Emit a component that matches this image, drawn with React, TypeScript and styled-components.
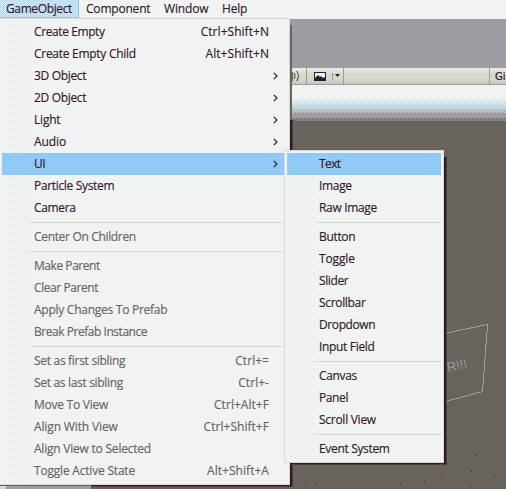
import React from "react";
import styled, { createGlobalStyle, css } from "styled-components";

const paper = "#f1f3f2";
const line = "#d6d9cb";
const sky = "#91c9f7";
const ink = "#32182b";
const stone = "#68635c";
const haze = "#9e9ba1";

const Global = createGlobalStyle`
  html, body { margin: 0; padding: 0; overflow: hidden; }
  body { background: ${stone}; font-family: "Open Sans", "Noto Sans", sans-serif; font-size: 12px; color: ${ink}; }
`;

const Window = styled.div`
  position: relative;
  width: 506px;
  height: 489px;
  overflow: hidden;
  display: flex;
  flex-direction: column;
`;

const MenuBar = styled.nav`
  flex: none;
  display: flex;
  height: 19px;
  background: ${paper};
`;

const BarItem = styled.span<{ $width: number; $active?: boolean; $spacing?: number }>`
  box-sizing: border-box;
  width: ${(p) => p.$width}px;
  height: 18px;
  padding-left: ${(p) => (p.$active ? 6 : 7)}px;
  line-height: 17px;
  white-space: nowrap;
  letter-spacing: ${(p) => p.$spacing ?? 0}px;
  -webkit-text-stroke: 0.15px currentColor;
  ${(p) =>
    p.$active &&
    css`
      border-right: 1px solid ${sky};
      border-bottom: 1px solid ${sky};
      background: repeating-conic-gradient(#a9d5f9 0 25%, #dcebf5 0 50%) 0 0 / 2px 2px;
    `}
`;

const Backdrop = styled.div`
  flex: none;
  height: 49px;
  background: ${haze};
`;

const SceneTools = styled.div`
  flex: none;
  display: flex;
  box-sizing: border-box;
  height: 17px;
  padding-left: 290px;
  border-bottom: 1px solid ${haze};
  background: linear-gradient(#eceee6 0, ${line} 6px, ${line} 11px, #c5c6bd 16px);
`;

const ToolCell = styled.div<{ $width: number }>`
  box-sizing: border-box;
  flex: none;
  display: flex;
  width: ${(p) => p.$width}px;
  height: 16px;
  border-right: 1px solid ${haze};
`;

const GizmoLabel = styled.span`
  padding-left: 5px;
  font: 10px/17px "DejaVu Sans", sans-serif;
  -webkit-text-stroke: 0.2px currentColor;
`;

const Horizon = styled.div`
  flex: none;
  height: 36px;
  background:
    repeating-conic-gradient(#91c9f755 0 25%, transparent 0 50%) 0 14px / 4px 4px repeat-x,
    repeating-conic-gradient(#91c9f766 0 25%, transparent 0 50%) 0 18px / 2px 2px repeat-x,
    repeating-conic-gradient(#91c9f799 0 25%, transparent 0 50%) 0 20px / 4px 2px repeat-x,
    repeating-conic-gradient(#91c9f799 0 25%, transparent 0 50%) 0 23px / 2px 2px repeat-x,
    repeating-conic-gradient(#d6d9cb88 0 25%, transparent 0 50%) 0 26px / 4px 2px repeat-x,
    repeating-conic-gradient(${haze} 0 25%, transparent 0 50%) 0 34px / 2px 2px repeat-x,
    linear-gradient(${paper} 0, ${paper} 14px, #dfe8e9 19px, #d0d8d5 23px, #b5bac0 26px, ${haze} 28px, ${haze} 33px, ${stone} 34px);
`;

const Scene = styled.div`
  flex: 1;
  background: ${stone};
`;

const WirePanel = styled.svg`
  position: absolute;
  left: 444px;
  top: 320px;
`;

const Specks = styled.svg`
  position: absolute;
  left: 290px;
  top: 450px;
`;

const BottomEdge = styled.div`
  position: absolute;
  left: 0;
  top: 485px;
  width: 91px;
  height: 4px;
  background: linear-gradient(90deg, ${line} 0 6px, ${haze} 6px);
  border-top: 1px solid ${stone};
`;

const MenuPanel = styled.div<{ $left: number; $top: number; $width: number; $height: number; $sub?: boolean }>`
  position: absolute;
  left: ${(p) => p.$left}px;
  top: ${(p) => p.$top}px;
  box-sizing: border-box;
  width: ${(p) => p.$width}px;
  height: ${(p) => p.$height}px;
  padding: 2px 2px 0;
  border: 1px solid ${line};
  border-left-width: ${(p) => (p.$sub ? 1 : 0)}px;
  background-color: ${paper};
`;

const Shade = styled.div<{ $left: number; $top: number; $width: number; $height: number; $tone?: string }>`
  position: absolute;
  left: ${(p) => p.$left}px;
  top: ${(p) => p.$top}px;
  width: ${(p) => p.$width}px;
  height: ${(p) => p.$height}px;
  background: repeating-conic-gradient(${(p) => p.$tone ?? ink} 0 25%, ${stone} 0 50%) 0 0 / 2px 2px;
  &::after {
    content: "";
    position: absolute;
    inset: 0 1px 1px 0;
    background: ${(p) => p.$tone ?? ink};
  }
`;

const List = styled.div`
  position: relative;
  display: flex;
  flex-direction: column;
  &::before {
    content: "";
    position: absolute;
    left: 1px;
    top: 2px;
    bottom: 0;
    width: 26px;
    background-image:
      radial-gradient(circle at 1.5px 1.5px, ${line} 0.7px, transparent 0.8px),
      radial-gradient(circle at 5.5px 2.5px, ${line} 0.7px, transparent 0.8px),
      radial-gradient(circle at 3.5px 5.5px, ${line} 0.7px, transparent 0.8px),
      radial-gradient(circle at 7.5px 6.5px, ${line} 0.7px, transparent 0.8px);
    background-size: 9px 8px;
  }
`;

const Row = styled.div<{ $active?: boolean; $disabled?: boolean }>`
  position: relative;
  flex: none;
  display: flex;
  align-items: flex-start;
  box-sizing: border-box;
  height: 22px;
  padding-left: 32px;
  line-height: 21px;
  white-space: nowrap;
  color: ${(p) => (p.$disabled ? "#68635f" : ink)};
  background: ${(p) => (p.$active ? sky : "transparent")};
  -webkit-text-stroke: 0.15px currentColor;
`;

const Label = styled.span<{ $spacing: number }>`
  flex: 1;
  letter-spacing: ${(p) => p.$spacing}px;
`;

const Shortcut = styled.span`
  padding-right: 18px;
  letter-spacing: 0.04px;
`;

const Arrow = styled.svg`
  flex: none;
  align-self: center;
  margin-right: 9px;
`;

const Rule = styled.div`
  flex: none;
  height: 1px;
  margin: 3px 0 3px 28px;
  background: ${line};
`;

type Entry = { label: string; keys?: string; arrow?: boolean; active?: boolean; disabled?: boolean; spacing?: number } | null;

const mainMenu: Entry[] = [
  { label: "Create Empty", keys: "Ctrl+Shift+N", spacing: -0.4 },
  { label: "Create Empty Child", keys: "Alt+Shift+N", spacing: -0.28 },
  { label: "3D Object", arrow: true },
  { label: "2D Object", arrow: true },
  { label: "Light", arrow: true, spacing: -0.2 },
  { label: "Audio", arrow: true, spacing: -0.1 },
  { label: "UI", arrow: true, active: true, spacing: -0.5 },
  { label: "Particle System" },
  { label: "Camera" },
  null,
  { label: "Center On Children", disabled: true },
  null,
  { label: "Make Parent", disabled: true, spacing: -0.45 },
  { label: "Clear Parent", disabled: true, spacing: -0.42 },
  { label: "Apply Changes To Prefab", disabled: true, spacing: -0.26 },
  { label: "Break Prefab Instance", disabled: true, spacing: -0.46 },
  null,
  { label: "Set as first sibling", keys: "Ctrl+=", disabled: true, spacing: -0.3 },
  { label: "Set as last sibling", keys: "Ctrl+-", disabled: true, spacing: -0.32 },
  { label: "Move To View", keys: "Ctrl+Alt+F", disabled: true, spacing: -0.25 },
  { label: "Align With View", keys: "Ctrl+Shift+F", disabled: true, spacing: -0.13 },
  { label: "Align View to Selected", disabled: true, spacing: -0.22 },
  { label: "Toggle Active State", keys: "Alt+Shift+A", disabled: true, spacing: -0.2 },
];

const uiMenu: Entry[] = [
  { label: "Text", active: true, spacing: -0.6 },
  { label: "Image" },
  { label: "Raw Image" },
  null,
  { label: "Button" },
  { label: "Toggle", spacing: -0.15 },
  { label: "Slider", spacing: -0.4 },
  { label: "Scrollbar" },
  { label: "Dropdown", spacing: -0.4 },
  { label: "Input Field" },
  null,
  { label: "Canvas" },
  { label: "Panel", spacing: -0.4 },
  { label: "Scroll View", spacing: -0.27 },
  null,
  { label: "Event System" },
];

function Entries({ items }: { items: Entry[] }) {
  return (
    <List>
      {items.map((it, i) =>
        it === null ? (
          <Rule key={i} />
        ) : (
          <Row key={i} $active={it.active} $disabled={it.disabled}>
            <Label $spacing={it.spacing ?? -0.33}>{it.label}</Label>
            {it.keys && <Shortcut>{it.keys}</Shortcut>}
            {it.arrow && (
              <Arrow width="5" height="8" viewBox="0 0 5 8">
                <path d="M.8.8 4 4 .8 7.2" fill="none" stroke={ink} strokeWidth="1.2" />
              </Arrow>
            )}
          </Row>
        )
      )}
    </List>
  );
}

export default function App() {
  return (
    <Window>
      <Global />
      <MenuBar>
        <BarItem $width={79} $active $spacing={-0.38}>GameObject</BarItem>
        <BarItem $width={78} $spacing={-0.2}>Component</BarItem>
        <BarItem $width={58} $spacing={-0.15}>Window</BarItem>
        <BarItem $width={50} $spacing={-0.2}>Help</BarItem>
      </MenuBar>
      <Backdrop />
      <SceneTools>
        <ToolCell $width={17}>
          <svg width="16" height="16" viewBox="0 0 16 16" fill="none" stroke={stone} strokeWidth="1.2">
            <path d="M0 7 2 5v7L0 10" fill={ink} stroke={ink} />
            <path d="M4 5q2 3 0 6M6.500 3q4 5 0 10" />
          </svg>
        </ToolCell>
        <ToolCell $width={37}>
          <svg width="36" height="16" viewBox="0 0 36 16">
            <path d="M7 4h12v9H7z" fill={ink} />
            <path d="M8 5h10v4l-2 1-2-2-1 1-2-2-3 3z" fill={paper} />
            <path d="M25.500 5v8" stroke={haze} />
            <path d="M28 6h5l-2.500 3z" fill={ink} />
          </svg>
        </ToolCell>
        <ToolCell $width={146} />
        <GizmoLabel>Gi</GizmoLabel>
      </SceneTools>
      <Horizon />
      <Scene />
      <WirePanel width="62" height="90" viewBox="0 0 62 90" fill="none" stroke={haze} shapeRendering="crispEdges">
        <path d="M0 13.500 43.500 4.500 38.500 71.500 0 82" />
        <text x="4" y="52" fill={haze} stroke="none" fontFamily="Liberation Sans" fontSize="13" transform="rotate(-13 4 52)">R!!!</text>
      </WirePanel>
      <Specks width="216" height="39" viewBox="0 0 216 39" fill={ink}>
        <path d="M15 32h1v1h-1zM25 33h1v1h-1zM110 33h1v1h-1zM134 31h1v1h-1zM151 27h1v1h-1zM181 21h1v1h-1zM185 5h1v1h-1zM204 26h1v1h-1zM180 36h1v1h-1z" />
      </Specks>
      <BottomEdge />
      <Shade $left={289} $top={25} $width={3} $height={95} $tone={stone} />
      <Shade $left={91} $top={120} $width={202} $height={367} />
      <MenuPanel $left={0} $top={18} $width={290} $height={467}>
        <Entries items={mainMenu} />
      </MenuPanel>
      <Shade $left={291} $top={157} $width={156} $height={308} />
      <MenuPanel $left={284} $top={150} $width={160} $height={313} $sub>
        <Entries items={uiMenu} />
      </MenuPanel>
    </Window>
  );
}
